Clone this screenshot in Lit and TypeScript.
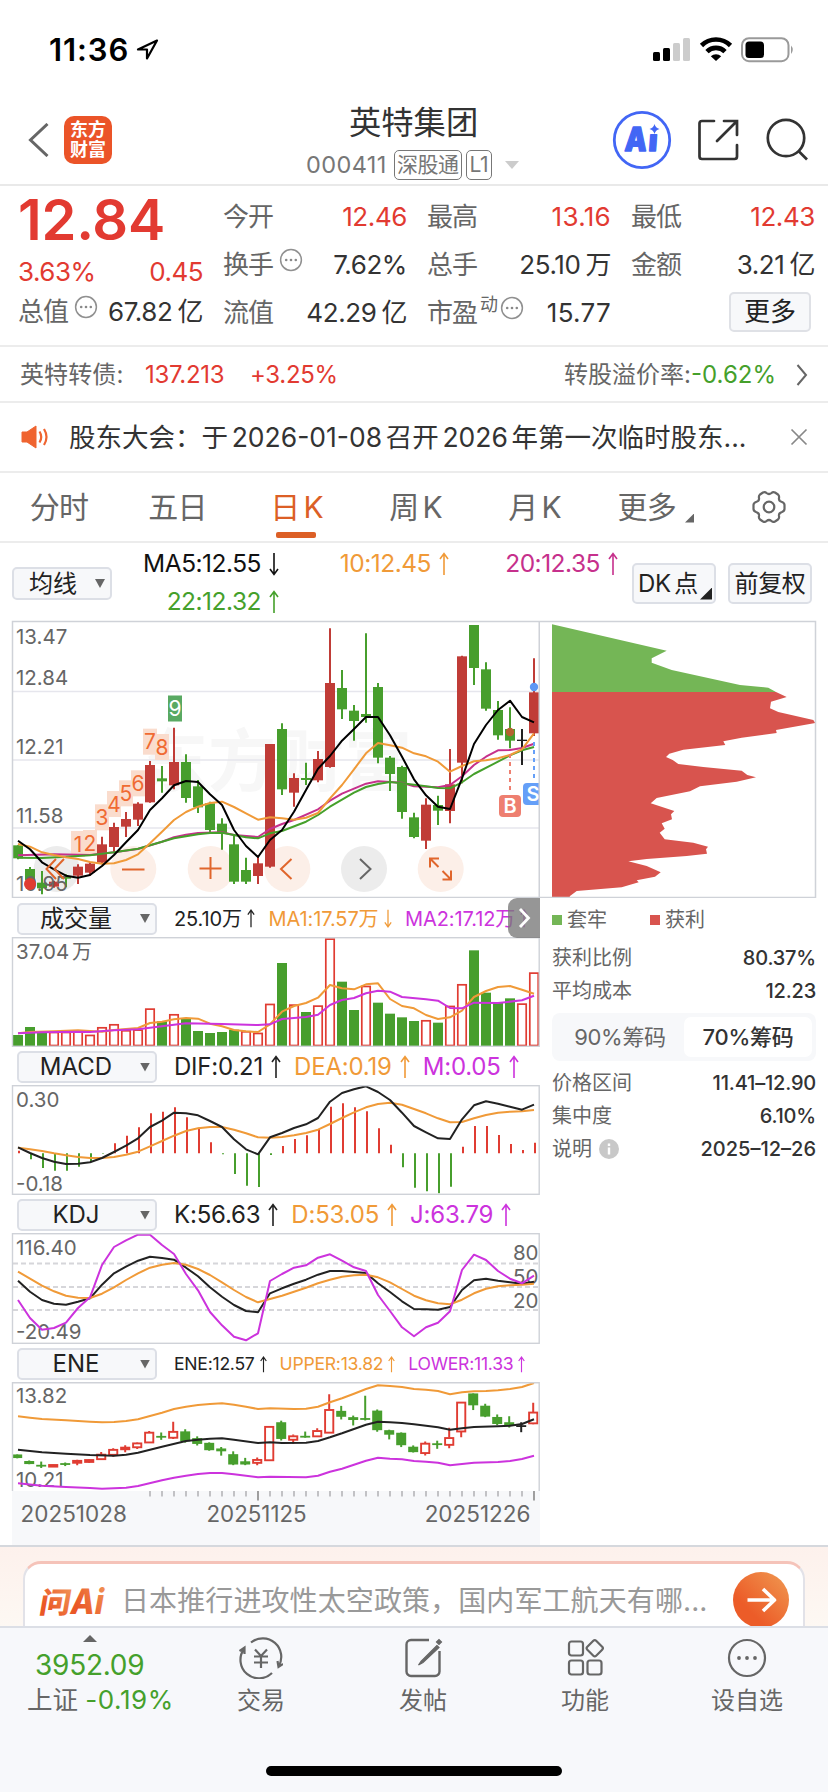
import { LitElement, html, svg, css } from "lit";
import { customElement } from "lit/decorators.js";

type Pt = [number, number];
const RED = "#c03c37";
const GREEN = "#479e2d";
const UPRED = "#e03c32";
const ORANGE = "#f09a38";
const PURPLE = "#cc33dd";
const cx = (i: number) => 18 + i * 12;

// kind, body top, body bottom, high, low
const candles: [string, number, number, number, number][] = [
  ["g", 706, 745, 706, 748], ["g", 777, 810, 771, 812], ["g", 818, 835, 783, 853], ["r", 815, 830, 812, 833],
  ["g", 800, 806, 793, 832], ["r", 770, 797, 763, 822], ["r", 761, 788, 756, 797], ["r", 703, 758, 680, 763],
  ["r", 651, 711, 638, 730], ["r", 627, 650, 606, 681], ["r", 581, 629, 577, 648], ["r", 465, 577, 453, 578],
  ["g", 505, 514, 468, 548], ["r", 456, 526, 353, 538], ["g", 456, 564, 433, 578], ["g", 529, 592, 510, 609],
  ["g", 580, 660, 575, 666], ["g", 641, 672, 625, 719], ["g", 703, 815, 672, 822], ["g", 780, 815, 743, 822],
  ["r", 760, 798, 738, 822], ["r", 402, 770, 402, 773], ["g", 357, 538, 340, 555], ["r", 504, 548, 490, 590],
  ["g", 504, 510, 458, 525], ["r", 447, 511, 423, 517], ["r", 219, 471, 55, 473], ["g", 234, 298, 180, 327],
  ["g", 302, 333, 285, 392], ["g", 312, 321, 70, 338], ["g", 231, 443, 219, 460], ["g", 443, 492, 438, 543],
  ["g", 471, 606, 467, 626], ["g", 622, 681, 608, 685], ["r", 584, 692, 565, 717], ["g", 585, 602, 557, 645],
  ["r", 523, 603, 417, 640], ["r", 139, 458, 137, 520], ["g", 45, 174, 45, 225], ["g", 178, 296, 157, 302],
  ["g", 300, 376, 273, 389], ["g", 357, 392, 292, 415], ["k", 389, 393, 357, 465], ["r", 247, 370, 145, 378],
];

const ma5 = [692, 718, 757, 778, 797, 803, 795, 768, 735, 697, 660, 600, 565, 526, 513, 516, 553, 585, 660, 708, 741, 690, 660, 605, 540, 476, 438, 392, 357, 321, 321, 376, 440, 508, 556, 590, 597, 505, 402, 345, 300, 272, 321, 337];
const ma10 = [702, 710, 727, 735, 742, 747, 756, 761, 760, 750, 733, 700, 665, 630, 606, 590, 579, 575, 591, 610, 629, 622, 625, 629, 623, 609, 565, 525, 478, 430, 399, 406, 413, 430, 439, 455, 485, 468, 454, 451, 445, 435, 418, 370];
const ma20: Pt[] = [[0, 736], [3, 733], [6, 735], [8, 727], [10, 717], [12, 695], [13, 682], [14, 674], [15, 669], [17, 667], [18, 675], [20, 681], [21, 657], [22, 642], [23, 630], [25, 598], [26, 572], [27, 551], [29, 521], [30, 514], [32, 518], [33, 529], [35, 532], [36, 525], [37, 499], [38, 465], [39, 440], [40, 421], [41, 420], [42, 414], [43, 401]];
const ma22: Pt[] = [[0, 743], [2, 744], [4, 740], [6, 736], [8, 727], [10, 716], [12, 695], [13, 685], [15, 673], [16, 669], [17, 668], [18, 675], [19, 682], [20, 685], [21, 670], [22, 663], [24, 635], [25, 615], [26, 590], [28, 548], [29, 531], [30, 522], [31, 516], [32, 520], [34, 529], [35, 534], [36, 535], [37, 517], [38, 492], [40, 455], [41, 436], [42, 421], [43, 411]];

const volume = [435, 411, 428, 425, 425, 423, 434, 411, 402, 420, 418, 355, 394, 372, 386, 423, 429, 426, 419, 423, 428, 341, 219, 343, 366, 346, 145, 275, 360, 287, 338, 371, 382, 393, 390, 398, 347, 282, 181, 308, 339, 325, 340, 247];
const volKinds = "gggrrrrrrrrrgrgggggrrrgrgrrggrggggrgrrggggrr";
const volMa1: Pt[] = [[0, 430], [1, 426], [3, 424], [5, 421], [7, 425], [8, 420], [10, 414], [11, 399], [12, 395], [13, 388], [14, 384], [15, 386], [16, 401], [17, 409], [18, 420], [19, 424], [20, 426], [21, 403], [22, 365], [23, 348], [24, 339], [25, 323], [26, 285], [27, 295], [28, 298], [29, 283], [30, 280], [31, 327], [32, 348], [33, 355], [34, 375], [35, 387], [36, 382], [37, 362], [38, 321], [39, 303], [40, 291], [41, 288], [42, 299], [43, 311]];
const volMa2: Pt[] = [[0, 430], [2, 427], [5, 425], [6, 426], [8, 421], [10, 418], [12, 409], [14, 400], [17, 402], [20, 405], [21, 403], [22, 387], [24, 381], [25, 374], [26, 345], [27, 330], [28, 324], [29, 310], [30, 302], [31, 305], [32, 321], [34, 328], [35, 332], [36, 354], [37, 355], [38, 338], [40, 339], [42, 331], [43, 317]];

const macdBars = [782, 808, 834, 842, 842, 830, 817, 791, 760, 737, 712, 670, 665, 652, 682, 713, 757, 793, 852, 887, 891, 795, 768, 747, 736, 717, 650, 640, 652, 664, 715, 764, 832, 893, 904, 910, 890, 770, 708, 708, 735, 762, 780, 758];
const dif = [772, 789, 804, 815, 822, 821, 817, 804, 786, 767, 745, 711, 692, 668, 670, 676, 693, 711, 748, 778, 793, 742, 729, 714, 703, 684, 635, 609, 598, 589, 606, 630, 668, 708, 727, 745, 747, 688, 646, 634, 641, 650, 659, 644];
const dea = [773, 778, 783, 790, 796, 801, 804, 804, 801, 794, 785, 769, 753, 737, 723, 715, 711, 711, 719, 730, 742, 743, 741, 736, 729, 719, 702, 684, 667, 652, 642, 638, 644, 657, 670, 685, 697, 696, 685, 675, 668, 665, 664, 660];

const kLine = [272, 305, 330, 341, 344, 335, 325, 284, 250, 230, 212, 200, 204, 209, 233, 259, 292, 320, 345, 363, 367, 310, 295, 281, 269, 254, 243, 243, 246, 249, 280, 306, 334, 357, 358, 359, 351, 300, 271, 266, 272, 277, 281, 275];
const dLine = [245, 266, 287, 304, 317, 323, 324, 311, 292, 270, 250, 233, 224, 219, 224, 237, 255, 277, 300, 321, 337, 327, 317, 305, 293, 280, 269, 260, 256, 254, 262, 277, 297, 317, 331, 340, 343, 329, 310, 296, 289, 286, 284, 281];
const jLine = [330, 384, 419, 414, 398, 354, 322, 225, 171, 151, 134, 134, 165, 192, 252, 301, 366, 406, 440, 451, 430, 273, 252, 233, 226, 203, 193, 212, 232, 243, 315, 363, 412, 439, 412, 398, 364, 240, 194, 210, 243, 266, 280, 257];

const eneUp: Pt[] = [[0, 679], [1, 683], [2, 687], [4, 691], [6, 695], [7, 697], [8, 696], [9, 693], [10, 688], [12, 668], [13, 657], [14, 650], [15, 645], [16, 642], [17, 640], [18, 644], [19, 650], [20, 657], [21, 655], [23, 657], [24, 656], [25, 650], [26, 637], [27, 625], [28, 611], [29, 597], [30, 586], [31, 588], [32, 591], [33, 597], [34, 599], [35, 603], [36, 613], [37, 607], [38, 604], [39, 603], [40, 601], [41, 597], [42, 591], [43, 579]];
const eneMid: Pt[] = [[0, 779], [2, 787], [4, 791], [6, 795], [8, 797], [9, 794], [10, 788], [12, 770], [14, 753], [15, 749], [16, 746], [17, 745], [18, 749], [20, 759], [21, 757], [22, 759], [24, 758], [25, 753], [26, 742], [27, 730], [28, 717], [29, 704], [30, 695], [31, 697], [32, 699], [33, 703], [34, 707], [35, 712], [36, 719], [37, 715], [38, 711], [40, 709], [41, 707], [42, 702], [43, 688]];
const eneLow: Pt[] = [[0, 880], [2, 887], [4, 891], [6, 894], [7, 896], [9, 893], [10, 888], [12, 871], [13, 863], [14, 857], [15, 852], [16, 849], [17, 849], [18, 853], [20, 862], [21, 860], [24, 862], [25, 857], [26, 845], [27, 836], [28, 824], [29, 812], [30, 803], [31, 806], [32, 808], [33, 813], [34, 815], [35, 818], [36, 826], [37, 822], [38, 818], [40, 816], [41, 813], [42, 807], [43, 797]];

const trapped: Pt[] = [[36, 43], [380, 122], [335, 145], [335, 158], [395, 180], [600, 225], [685, 233], [708, 246], [36, 246]];
const profit: Pt[] = [[36, 246], [708, 246], [740, 261], [693, 275], [690, 295], [715, 306], [820, 330], [826, 339], [708, 360], [710, 369], [605, 383], [550, 394], [556, 405], [430, 419], [388, 431], [378, 441], [398, 450], [415, 462], [490, 471], [605, 482], [622, 495], [648, 502], [590, 515], [480, 529], [450, 544], [350, 564], [332, 580], [403, 603], [393, 613], [396, 628], [365, 640], [374, 656], [359, 668], [374, 688], [460, 698], [504, 710], [498, 718], [501, 731], [440, 738], [320, 747], [265, 754], [320, 768], [362, 787], [345, 800], [290, 811], [296, 817], [245, 832], [110, 843], [90, 858], [88, 864], [36, 864]];

const counts: Pt[] = [[1, 702], [2, 699], [3, 622], [4, 582], [5, 550], [6, 520], [7, 395], [8, 411]];

const line = (data: number[] | Pt[], base: number, color: string, w = 2) => {
  const pts = (data as any[])
    .map((d, i) => (Array.isArray(d) ? d : [i, d]))
    .map(([i, y]) => `${cx(i)},${(base + y / 3).toFixed(1)}`)
    .join(" ");
  return svg`<polyline points=${pts} fill="none" stroke=${color} stroke-width=${w} stroke-linejoin="round"/>`;
};
const label = (x: number, y: number, t: string, anchor = "start", size = 20.5) =>
  svg`<text x=${x} y=${y} font-size=${size} fill="#666" text-anchor=${anchor}>${t}</text>`;

const arrow = (down = false) => html`<svg class="arr ${down ? "down" : ""}" viewBox="0 0 10 24"><path d="M5 23V1.5M1 7L5 1.5L9 7" fill="none" stroke="currentColor" stroke-width="1.6"/></svg>`;
const dots = html`<svg class="dots" viewBox="0 0 24 24"><circle cx="12" cy="12" r="10.4" fill="none" stroke="#909090" stroke-width="1.5"/><g fill="#888"><circle cx="7.2" cy="12" r="1.3"/><circle cx="12" cy="12" r="1.3"/><circle cx="16.8" cy="12" r="1.3"/></g></svg>`;

@customElement("app-root")
export class AppRoot extends LitElement {
  static styles = css`
    :host { display: flex; flex-direction: column; width: 828px; height: 1792px; overflow: hidden; background: #fff; color: #333;
      font-family: Inter, "Noto Sans CJK SC", sans-serif; font-size: 26px; line-height: 1; }
    * { box-sizing: border-box; }
    svg { display: block; flex: none; }
    svg text { font-family: Inter, "Noto Sans CJK SC", sans-serif; }
    .red { color: #e23a31; } .green { color: #45a02b; } .gray { color: #666; }
    .status { height: 88px; padding: 11px 33px 0 49px; display: flex; align-items: center; }
    .time { font-size: 31px; font-weight: 600; color: #000; letter-spacing: 0.9px; width: 87px; }
    .grow { flex: 1; }
    .nav { height: 98px; border-bottom: 2px solid #e9e9e9; display: grid; grid-template-columns: 306px 220px 1fr; }
    .left { display: flex; align-items: center; padding: 7px 0 0 28px; gap: 15px; }
    .logo { width: 48px; height: 48px; border-radius: 10px; background: #eb5428; color: #fff; font-weight: 700; font-size: 18px;
      line-height: 20px; text-align: center; padding-top: 4px; }
    .mid { display: flex; flex-direction: column; }
    .name { font-size: 32.3px; height: 61px; padding: 18px 0 0 43px; line-height: 34px; white-space: nowrap; }
    .code { display: flex; align-items: center; height: 32px; font-size: 23.5px; color: #777; }
    .code .num { width: 88px; letter-spacing: 0.4px; }
    .tag { border: 1.5px solid #777; border-radius: 5px; height: 30px; font-size: 21px; line-height: 27px; padding: 0 2px; margin-right: 4px; white-space: nowrap; letter-spacing: -0.5px; }
    .tag.l { padding: 0 3px; margin-right: 13px; }
    .tools { display: flex; align-items: center; padding: 8px 17px 0 86px; gap: 26px; }
    .quote { height: 161px; border-bottom: 2px solid #ececec; padding: 7px 13px 0 18px; display: grid; grid-template-columns: 185px repeat(3, 184px); column-gap: 20px; }
    .price { font-size: 56px; font-weight: 600; height: 62px; line-height: 54px; letter-spacing: -0.2px; }
    .pct { height: 33px; display: flex; align-items: center; justify-content: space-between; letter-spacing: -0.5px; }
    .cell { height: 48px; display: flex; align-items: center; letter-spacing: -0.4px; white-space: nowrap; }
    .cell .v { margin-left: auto; }
    .cell u { text-decoration: none; margin-left: 5px; letter-spacing: -0.5px; }
    .cell .gray { letter-spacing: -1px; }
    .cell .w { letter-spacing: 0.3px; }
    .dots { width: 24px; height: 24px; margin: -10px 0 0 6px; }
    .sup { font-size: 18px; margin: -16px 0 0 3px; color: #666; }
    .sup + .dots { margin-left: 2px; }
    .morebtn { width: 82px; height: 40px; margin: 3px 4px 0 auto; border: 2px solid #dfe1e6; border-radius: 5px; background: #f7f8fa; color: #222; text-align: center; line-height: 36px; font-size: 26px; }
    .bond { height: 56px; border-bottom: 2px solid #ececec; display: flex; align-items: center; padding: 1px 20px 0 20px; font-size: 24px; letter-spacing: -0.3px; }
    .bond .a { width: 125px; letter-spacing: 0.1px; } .bond .b { width: 105px; }
    .bond .p { letter-spacing: 0; }
    .bond .chev { margin-left: 20px; }
    .notice { height: 70px; border-bottom: 2px solid #ececec; display: flex; align-items: center; padding: 0 20px 0 21px; font-size: 26.5px; white-space: nowrap; }
    .notice .t { margin-left: 20px; flex: 1; word-spacing: -3.8px; }
    .tabs { height: 70px; border-bottom: 2px solid #ececec; display: grid; grid-template-columns: 118px 119px 119px 119px 119px 100px 1fr; font-size: 30px; color: #666; }
    .tab { display: flex; flex-direction: column; align-items: center; line-height: 69px; height: 68px; white-space: nowrap; letter-spacing: -0.8px; word-spacing: -3.5px; }
    .tab.on { color: #dc5f26; }
    .tab.on::after { content: ""; width: 40px; height: 6px; border-radius: 2px; background: #dc5f26; margin: -10px 1px 0 0; }
    .tab.m { flex-direction: row; justify-content: flex-end; gap: 9px; }
    .tri { width: 9px; height: 9px; background: #666; clip-path: polygon(100% 0, 100% 100%, 0 100%); margin-top: 22px; }
    .tab.g { align-items: flex-end; justify-content: center; padding-right: 42px; }
    .marow { height: 77px; display: grid; grid-template-columns: 112px 167px 170px 169px 14px 84px 12px 84px; }
    .btn { border: 2px solid #dcdfe6; border-radius: 5px; background: #f7f8fa; color: #222; display: flex; align-items: center; white-space: nowrap; flex: none; }
    .mab { margin: 24px 0 0 12px; width: 100px; height: 33px; font-size: 24px; padding-left: 15px; }
    .caret { width: 10px; height: 9px; background: #666; clip-path: polygon(0 0, 100% 0, 50% 100%); margin: 0 5px 0 auto; }
    .ma { display: flex; justify-content: flex-end; align-items: center; height: 38px; font-size: 24.5px; letter-spacing: -0.5px; white-space: nowrap; padding-top: 3px; }
    .macol { display: flex; flex-direction: column; }
    .arr { width: 10px; height: 24px; margin-left: 8px; }
    .down { transform: rotate(180deg); }
    .blk { color: #111; } .or { color: #f09a38; } .mg { color: #c6308c; } .pu { color: #cc33dd; } .dk { color: #222; }
    .tb { height: 41px; margin-top: 20px; font-size: 24px; justify-content: center; letter-spacing: -0.3px; word-spacing: -3px; }
    .dkb { padding-left: 4px; justify-content: flex-start; }
    .dkb i { width: 12px; height: 12px; background: #222; clip-path: polygon(100% 0, 100% 100%, 0 100%); margin: 20px 0 0 2px; }
    .body { display: flex; height: 925px; }
    .charts { width: 540px; position: relative; }
    .head { height: 39px; display: flex; align-items: center; padding: 2px 0 0 17px; white-space: nowrap; overflow: hidden; }
    .head.s { height: 38px; }
    .sel { width: 140px; height: 32px; font-size: 24px; margin-right: 17px; }
    .sel span { flex: 1; text-align: center; margin: 0 2px 0 -5px; }
    .h { display: flex; flex: none; align-items: center; margin-right: 13px; font-size: 24px; letter-spacing: -0.2px; }
    .sm .h { font-size: 20px; letter-spacing: -0.1px; margin-right: 12.5px; }
    .sm .arr { height: 19px; margin-left: 4px; }
    .xs .h { font-size: 17.6px; letter-spacing: -0.25px; margin-right: 12px; }
    .xs .arr { height: 17px; margin-left: 4px; width: 9px; }
    .pull { position: absolute; left: 508px; top: 278px; width: 32px; height: 40px; border-radius: 9px 0 0 9px; background: rgba(120,120,120,.78); padding: 10px 0 0 9px; }
    .side { width: 288px; }
    .info { padding: 0 12px; font-size: 20px; color: #666; }
    .legend { height: 44px; display: flex; align-items: center; }
    .sq { width: 10px; height: 10px; margin-right: 5px; }
    .sq.gn { background: #74b656; } .sq.rd { background: #d8544e; margin-left: 43px; }
    .row { height: 32.5px; display: flex; align-items: center; }
    .row b { margin-left: auto; font-weight: 500; color: #333; font-size: 20px; letter-spacing: -0.2px; }
    .row.d { height: 34.5px; } .row.d b { letter-spacing: 0; }
    .seg { height: 48px; border-radius: 8px; background: #f7f8fa; padding: 4px; display: flex; margin: 6px 0; font-size: 22px; }
    .seg div { flex: 1; line-height: 40px; text-align: center; border-radius: 7px; letter-spacing: -0.3px; white-space: nowrap; }
    .seg .s { background: #fff; color: #333; font-weight: 500; }
    .ask { height: 81px; border-top: 2px solid #d5d8dd; background: linear-gradient(#fdf1ec, #fdf8f3); padding: 14px 23px 0; overflow: hidden; flex: none; }
    .card { height: 90px; border: 2px solid #e2e2e8; border-top: 3px solid #f5c3b9; border-radius: 18px; background: #fff; display: flex; padding-left: 13px; }
    .wen { margin-top: 13px; }
    .q { color: #999; font-size: 28px; line-height: 75px; letter-spacing: 0.1px; white-space: nowrap; width: 609px; margin-left: -3px; }
    .go { margin: 8px 0 0 3px; }
    .foot { height: 166px; border-top: 2px solid #dcdfe6; background: #f7f8fb; display: grid; grid-template-columns: 180px repeat(4, 162px); font-size: 24px; color: #666; position: relative; }
    .idx { white-space: nowrap; }
    .up { width: 14px; height: 7px; background: #666; clip-path: polygon(50% 0, 100% 100%, 0 100%); margin: 7px 0 0 83px; }
    .pt { font-size: 28px; height: 34px; line-height: 34px; margin-top: 6px; padding-left: 35px; letter-spacing: -0.25px; }
    .sz { height: 32px; line-height: 32px; font-size: 25.5px; margin-top: 2px; padding-left: 27px; letter-spacing: 0; }
    .sz .green { font-size: 26px; letter-spacing: 0.6px; }
    .item { display: flex; flex-direction: column; align-items: center; padding-top: 9px; line-height: 30px; }
    .item span { margin-top: 7px; }
    .home { position: absolute; left: 266px; top: 138px; width: 296px; height: 10px; border-radius: 5px; background: #000; }
  `;

  private mainChart() {
    return html`<svg width="540" height="278" viewBox="0 620 540 278">
      <g font-weight="700" font-size="68" fill="#f7f7f7"><text x="140" y="786" textLength="272">东方财富</text></g>
      <path d="M13 691.5H540M13 760H540M13 828H540" stroke="#e6e6ed" stroke-width="1.3"/>
      ${[56.7, 133.3, 210.7, 287.3, 364, 440.7].map((x, i) => svg`<circle cx=${x} cy="869" r="23" fill=${i % 4 ? "#fcefe8" : "#ececec"}/>`)}
      ${counts.map(([n, y]) => svg`<rect x=${cx(n + 4) - 7} y=${610 + y / 3 - 13} width="14" height="26" fill="#fadccd"/>`)}
      <rect x="168" y="695.5" width="14" height="26" fill="#59a962"/>
      ${candles.map(([k, t, b, h, l], i) => {
        const c = k === "g" ? GREEN : k === "r" ? RED : "#222";
        return svg`<path d="M${cx(i)} ${610 + h / 3}V${610 + l / 3}" stroke=${c} stroke-width="2"/><rect x=${cx(i) - 5} y=${610 + t / 3} width="10" height=${(b - t) / 3} fill=${c}/>`;
      })}
      ${label(16, 644, "13.47")}${label(16, 685, "12.84")}${label(16, 754, "12.21")}${label(16, 822.5, "11.58")}${label(16, 891, "10.95")}
      ${line(ma20, 610, "#c6308c")}${line(ma22, 610, "#45a02b")}${line(ma10, 610, ORANGE)}${line(ma5, 610, "#000")}
      ${counts.map(([n, y]) => svg`<text x=${cx(n + 4)} y=${617.5 + y / 3} font-size="21" fill="#f06a32" text-anchor="middle">${n}</text>`)}
      <text x="175" y="716" font-size="21" fill="#fff" text-anchor="middle">9</text>
      <circle cx="30" cy="884" r="6" fill="#e03c32"/>
      <circle cx="510" cy="732" r="4.2" fill="#b4622f"/><circle cx="534" cy="687" r="4.2" fill="#5c97f5"/>
      <path d="M510 754V793" stroke="#ee7f70" stroke-width="2" stroke-dasharray="4 4"/>
      <path d="M534 742V782" stroke="#659ff8" stroke-width="2" stroke-dasharray="4 4"/>
      <rect x="499" y="795" width="22" height="22" rx="4" fill="#ee7f70"/><text x="510" y="813" font-size="20" font-weight="600" fill="#fff" text-anchor="middle">B</text>
      <path d="M540 783H527a4 4 0 0 0-4 4v14a4 4 0 0 0 4 4h13z" fill="#659ff8"/><text x="526.5" y="801" font-size="20" font-weight="600" fill="#fff">S</text>
      <g fill="none" stroke="#e0662c" stroke-width="2">
        <path d="M56 859L46.500 869L56 879M64 859L54.500 869L64 879"/>
        <path d="M122 869.500H144.500M199.500 868.500H221.500M210.500 857V879"/>
        <path d="M291.500 859L281 869L291.500 879"/><path d="M360 859L370.500 869L360 879" stroke="#666"/>
        <path d="M430 867.500V858.500H439M430.500 859L438.500 867M442.500 879.500H451V870.500M442.500 871L451 879.500"/>
      </g>
      <path d="M540 621.500H12.500V897.500H540" fill="none" stroke="#cfd2d8" stroke-width="1.5"/>
      <rect x="538.500" y="621" width="1.500" height="277" fill="#cfd2d8"/>
    </svg>`;
  }

  private volumeChart() {
    return html`<svg width="540" height="110" viewBox="0 937 540 110">
      ${label(16, 958.5, "37.04")}${label(72, 958.5, "万", "start", 20)}
      ${volume.map((y, i) => {
        const t = 890 + y / 3, r = volKinds[i] === "r";
        return r
          ? svg`<rect x=${cx(i) - 4.2} y=${t + 0.8} width="8.4" height=${1044.7 - t} fill="#fff" stroke=${UPRED} stroke-width="1.7"/>`
          : svg`<rect x=${cx(i) - 5} y=${t} width="10" height=${1046 - t} fill=${GREEN}/>`;
      })}
      ${line(volMa1, 890, ORANGE)}${line(volMa2, 890, PURPLE)}
      <rect x="12.500" y="937.700" width="526.700" height="108.600" fill="none" stroke="#cfd2d8" stroke-width="1.4"/>
    </svg>`;
  }

  private macdChart() {
    return html`<svg width="540" height="110" viewBox="0 1085 540 110">
      ${label(16, 1106.5, "0.30")}${label(16, 1190.5, "-0.18")}
      ${macdBars.map((y, i) => svg`<path d="M${cx(i) + 1} 1153.3V${890 + y / 3}" stroke=${y > 790 ? GREEN : UPRED} stroke-width="2"/>`)}
      ${line(dea, 890, ORANGE)}${line(dif, 890, "#222")}
      <rect x="12.500" y="1085.700" width="526.700" height="108.600" fill="none" stroke="#cfd2d8" stroke-width="1.4"/>
    </svg>`;
  }

  private kdjChart() {
    return html`<svg width="540" height="111" viewBox="0 1233 540 111">
      <path d="M13 1263.500H539M13 1287H539M13 1310H539" stroke="#d6d6da" stroke-width="1.8" stroke-dasharray="5 3"/>
      ${label(16, 1254.5, "116.40")}${label(16, 1338.5, "-20.49")}
      ${label(538.5, 1259.5, "80", "end")}${label(538.5, 1283.5, "50", "end")}${label(538.5, 1308, "20", "end")}
      ${line(kLine, 1190, "#222")}${line(dLine, 1190, ORANGE)}${line(jLine, 1190, PURPLE)}
      <rect x="12.500" y="1233.700" width="526.700" height="109.600" fill="none" stroke="#cfd2d8" stroke-width="1.4"/>
    </svg>`;
  }

  private eneChart() {
    const m = (y: number) => 1190 + (597.8 + 0.277 * y) / 3;
    return html`<svg width="540" height="163" viewBox="0 1382 540 163">
      <rect x="12" y="1491" width="528" height="54" fill="#f7f8fa"/>
      ${label(16, 1402.5, "13.82")}${label(16, 1486.5, "10.21")}
      ${candles.map(([k, t, b, h, l], i) => {
        const x = cx(i) - 0.8, T = m(t), B = m(b);
        return k === "r"
          ? svg`<path d="M${x} ${m(h)}V${T}M${x} ${B}V${m(l)}" stroke=${UPRED} stroke-width="2"/><rect x=${x - 4.1} y=${T + 0.5} width="8.2" height=${Math.max(B - T - 0.6, 1.6)} fill="#fff" stroke=${UPRED} stroke-width="1.9"/>`
          : svg`<path d="M${x} ${m(h)}V${m(l)}" stroke=${k === "g" ? GREEN : "#222"} stroke-width="2"/><rect x=${x - 5} y=${T} width="10" height=${Math.max(B - T, 1.8)} fill=${k === "g" ? GREEN : "#222"}/>`;
      })}
      ${line(eneUp, 1190, ORANGE)}${line(eneMid, 1190, "#222")}${line(eneLow, 1190, PURPLE)}
      ${Array.from({ length: 33 }, (_, k) => k + 11).map((i) => svg`<path d="M${cx(i)} 1491V${i === 20 || i === 43 ? 1500.5 : 1496.5}" stroke=${i === 20 || i === 43 ? "#888" : "#b4b4b8"} stroke-width="1.6"/>`)}
      ${label(20.5, 1522, "20251028", "start", 22.5)}${label(206.5, 1522, "20251125", "start", 22.3)}${label(530.5, 1522, "20251226", "end", 22.5)}
      <path d="M12.500 1491V1382.700H539.200V1491" fill="none" stroke="#cfd2d8" stroke-width="1.4"/>
    </svg>`;
  }

  private chips() {
    const p = (a: Pt[]) => a.map(([x, y]) => `${(x / 3).toFixed(1)},${(610 + y / 3).toFixed(1)}`).join(" ");
    return html`<svg width="288" height="278" viewBox="0 620 288 278">
      <polygon points=${p(trapped)} fill="#74b656"/><polygon points=${p(profit)} fill="#d8544e"/>
      <path d="M0 621.500H275.500V897.500H0" fill="none" stroke="#cfd2d8" stroke-width="1.5"/>
    </svg>`;
  }

  render() {
    return html`
      <div class="status">
        <div class="time">11:36</div>
        <svg width="23" height="22" viewBox="0 0 23 22"><path d="M21 1.500L2 10.500H11V19.500Z" fill="none" stroke="#000" stroke-width="2.2" stroke-linejoin="round"/></svg>
        <div class="grow"></div>
        <svg width="143" height="28" viewBox="652 36 143 28">
          <rect x="653" y="52" width="7" height="9" rx="1.5"/><rect x="663" y="48" width="7" height="13" rx="1.5"/>
          <rect x="673" y="43" width="7" height="18" rx="1.5" fill="#ccc"/><rect x="683" y="38" width="7" height="23" rx="1.5" fill="#ccc"/>
          <g fill="none" stroke="#000" stroke-width="4.6"><path d="M701.500 45.500A20.500 20.500 0 0 1 730.500 45.500"/><path d="M707 51.700A12.600 12.600 0 0 1 725 51.700"/></g>
          <path d="M716 61L710.800 56.300A7.600 7.600 0 0 1 721.200 56.300Z"/>
          <rect x="742" y="38.200" width="46.500" height="23" rx="7" fill="none" stroke="#9a9a9a" stroke-width="2"/>
          <rect x="745.500" y="41.500" width="18.500" height="16.500" rx="3.5"/><path d="M791 45.500Q794.500 49.500 791 54Z" fill="#9a9a9a"/>
        </svg>
      </div>
      <div class="nav">
        <div class="left">
          <svg width="21" height="34" viewBox="0 0 21 34"><path d="M19.500 1L2.500 17L19.500 33" fill="none" stroke="#666" stroke-width="3"/></svg>
          <div class="logo">东方<br />财富</div>
        </div>
        <div class="mid">
          <div class="name">英特集团</div>
          <div class="code"><span class="num">000411</span><span class="tag">深股通</span><span class="tag l">L1</span>
            <svg width="14" height="8" viewBox="0 0 14 8"><path d="M0 0H14L7 8Z" fill="#ccc"/></svg></div>
        </div>
        <div class="tools">
          <svg width="60" height="60" viewBox="0 0 60 60"><circle cx="30" cy="30" r="27.7" fill="none" stroke="#4266f5" stroke-width="2.8"/>
            <g transform="skewX(-4)" fill="#4266f5" stroke="#4266f5" stroke-width="1.4" stroke-linejoin="round" font-weight="900"><text x="15" y="41" font-size="33" textLength="22" lengthAdjust="spacingAndGlyphs">A</text><text x="39" y="41.5" font-size="30">ı</text></g>
            <path d="M42.500 14Q43.500 18 47.500 19Q43.500 20 42.500 24Q41.500 20 37.500 19Q41.500 18 42.500 14Z" fill="#4266f5"/></svg>
          <svg width="41" height="42" viewBox="0 0 41 42"><path d="M16 2H4a2.500 2.500 0 0 0-2.500 2.500V37.500A2.500 2.500 0 0 0 4 40H36.500A2.500 2.500 0 0 0 39 37.500V26M26 2H39V16M38.500 2.500L19 22" fill="none" stroke="#333" stroke-width="2.7" stroke-linecap="round"/></svg>
          <svg width="44" height="44" viewBox="0 0 44 44"><circle cx="21" cy="20" r="18.2" fill="none" stroke="#333" stroke-width="2.7"/><path d="M33.500 33L42 41.500" stroke="#333" stroke-width="2.7"/></svg>
        </div>
      </div>
      <div class="quote">
        <div>
          <div class="price red">12.84</div>
          <div class="pct red"><span>3.63%</span><span>0.45</span></div>
          <div class="cell"><span class="gray">总值</span>${dots}<span class="v">67.82<u>亿</u></span></div>
        </div>
        <div>
          <div class="cell"><span class="gray">今开</span><span class="v red">12.46</span></div>
          <div class="cell"><span class="gray">换手</span>${dots}<span class="v">7.62%</span></div>
          <div class="cell"><span class="gray">流值</span><span class="v">42.29<u>亿</u></span></div>
        </div>
        <div>
          <div class="cell"><span class="gray">最高</span><span class="v red w">13.16</span></div>
          <div class="cell"><span class="gray">总手</span><span class="v">25.10<u>万</u></span></div>
          <div class="cell"><span class="gray">市盈</span><span class="sup">动</span>${dots}<span class="v w">15.77</span></div>
        </div>
        <div>
          <div class="cell"><span class="gray">最低</span><span class="v red">12.43</span></div>
          <div class="cell"><span class="gray">金额</span><span class="v">3.21<u>亿</u></span></div>
          <div class="morebtn">更多</div>
        </div>
      </div>
      <div class="bond"><span class="a gray">英特转债:</span><span class="b red">137.213</span><span class="red">+3.25%</span><span class="grow"></span>
        <span class="gray p">转股溢价率:</span><span class="green p">-0.62%</span>
        <svg class="chev" width="12" height="22" viewBox="0 0 12 22"><path d="M1.500 1L10 11L1.500 21" fill="none" stroke="#666" stroke-width="2"/></svg></div>
      <div class="notice">
        <svg width="28" height="24" viewBox="0 0 28 24"><path d="M1 7H6L15 1V23L6 17H1Z" fill="#ef6430" stroke="#ef6430" stroke-linejoin="round"/><path d="M18.500 6.500Q22 12 18.500 17.500M23 4Q28 12 23 20" fill="none" stroke="#ef6430" stroke-width="2.2"/></svg>
        <span class="t">股东大会：于 2026-01-08 召开 2026 年第一次临时股东...</span>
        <svg width="18" height="18" viewBox="0 0 18 18"><path d="M1.500 1.500L16.500 16.500M16.500 1.500L1.500 16.500" stroke="#888" stroke-width="1.7"/></svg>
      </div>
      <div class="tabs">
        <div class="tab">分时</div><div class="tab">五日</div><div class="tab on">日 K</div><div class="tab">周 K</div><div class="tab">月 K</div>
        <div class="tab m">更多<i class="tri"></i></div>
        <div class="tab g"><svg width="34" height="34" viewBox="0 0 34 34"><g fill="none" stroke="#666" stroke-width="2.2" stroke-linejoin="round"><path d="M11 2.500Q13 1.500 14.500 3Q17 5 19.500 3Q21 1.500 23 2.500L26 4.500Q27.500 6 27 8Q26.500 11 30 12Q32.500 13 32.500 15V19Q32.500 21 30 22Q26.500 23 27 26Q27.500 28 26 29.500L23 31.500Q21 32.500 19.500 31Q17 29 14.500 31Q13 32.500 11 31.500L8 29.500Q6.500 28 7 26Q7.500 23 4 22Q1.500 21 1.500 19V15Q1.500 13 4 12Q7.500 11 7 8Q6.500 6 8 4.500Z"/><circle cx="17" cy="17" r="5.3"/></g></svg></div>
      </div>
      <div class="marow">
        <div class="btn mab">均线<i class="caret"></i></div>
        <div class="macol"><div class="ma blk">MA5:12.55${arrow(true)}</div><div class="ma green">22:12.32${arrow()}</div></div>
        <div class="ma or">10:12.45${arrow()}</div>
        <div class="ma mg">20:12.35${arrow()}</div>
        <span></span><div class="btn tb dkb">DK 点<i></i></div><span></span><div class="btn tb">前复权</div>
      </div>
      <div class="body">
        <div class="charts">
          ${this.mainChart()}
          <div class="head sm"><div class="btn sel"><span>成交量</span><i class="caret"></i></div>
            <span class="h dk">25.10万${arrow()}</span><span class="h or">MA1:17.57万${arrow(true)}</span><span class="h pu">MA2:17.12万${arrow()}</span></div>
          ${this.volumeChart()}
          <div class="head s"><div class="btn sel"><span>MACD</span><i class="caret"></i></div>
            <span class="h dk">DIF:0.21${arrow()}</span><span class="h or">DEA:0.19${arrow()}</span><span class="h pu">M:0.05${arrow()}</span></div>
          ${this.macdChart()}
          <div class="head s"><div class="btn sel"><span>KDJ</span><i class="caret"></i></div>
            <span class="h dk">K:56.63${arrow()}</span><span class="h or">D:53.05${arrow()}</span><span class="h pu">J:63.79${arrow()}</span></div>
          ${this.kdjChart()}
          <div class="head s xs"><div class="btn sel"><span>ENE</span><i class="caret"></i></div>
            <span class="h dk">ENE:12.57${arrow()}</span><span class="h or">UPPER:13.82${arrow()}</span><span class="h pu">LOWER:11.33${arrow()}</span></div>
          ${this.eneChart()}
          <div class="pull"><svg width="14" height="20" viewBox="0 0 14 20"><path d="M3 1L11.500 10L3 19" fill="none" stroke="#fff" stroke-width="2.8"/></svg></div>
        </div>
        <div class="side">
          ${this.chips()}
          <div class="info">
            <div class="legend"><i class="sq gn"></i>套牢<i class="sq rd"></i>获利</div>
            <div class="row">获利比例<b>80.37%</b></div>
            <div class="row">平均成本<b>12.23</b></div>
            <div class="seg"><div>90%筹码</div><div class="s">70%筹码</div></div>
            <div class="row">价格区间<b>11.41–12.90</b></div>
            <div class="row">集中度<b>6.10%</b></div>
            <div class="row d">说明<svg width="36" height="20" viewBox="0 0 36 20"><circle cx="17" cy="10" r="10" fill="#c8c8c8"/><path d="M17 8.500V15.500M17 4.500V7" stroke="#fff" stroke-width="2.4"/></svg><b>2025–12–26</b></div>
          </div>
        </div>
      </div>
      <div class="ask"><div class="card">
        <svg class="wen" width="86" height="50" viewBox="0 -9 86 50"><defs><linearGradient id="og" x1="0" y1="1" x2="1" y2="0"><stop offset="0.3" stop-color="#ea5826"/><stop offset="1" stop-color="#f29a5c"/></linearGradient></defs>
          <g transform="skewX(-10)" fill="url(#og)" font-weight="900"><text x="5" y="27" font-size="29" textLength="31" lengthAdjust="spacingAndGlyphs">问</text><text x="36" y="28" font-size="35" font-weight="800" textLength="33" lengthAdjust="spacingAndGlyphs">Ai</text></g></svg>
        <div class="q">日本推行进攻性太空政策，国内军工航天有哪...</div>
        <svg class="go" width="56" height="56" viewBox="0 0 56 56"><defs><linearGradient id="gg" x1="0" y1="1" x2="1" y2="0"><stop offset=".3" stop-color="#ec5c28"/><stop offset="1" stop-color="#f09a52"/></linearGradient></defs><circle cx="28" cy="28" r="28" fill="url(#gg)"/><path d="M14.500 28H41M30 17L41.500 28L30 39" fill="none" stroke="#fff" stroke-width="3.6" stroke-linejoin="round"/></svg>
      </div></div>
      <div class="foot">
        <div class="idx"><div class="up"></div><div class="pt green">3952.09</div><div class="sz">上证 <span class="green">-0.19%</span></div></div>
        <div class="item"><svg width="44" height="42" viewBox="0 0 44 42"><g fill="none" stroke="#666" stroke-width="2.2"><path d="M12 5.500A18.500 18.500 0 0 1 39.500 29.500M38.500 24L39.500 30L44 27M33 36A18.500 18.500 0 0 1 5 12M0.500 14L5.500 10.500V17"/><path d="M16 12.500L22 19L28 12.500M22 19V31M15 19.500H29M15 25.500H29"/></g></svg><span>交易</span></div>
        <div class="item"><svg width="40" height="42" viewBox="0 0 40 42"><path d="M26 3H8a4.500 4.500 0 0 0-4.500 4.500V34.500A4.500 4.500 0 0 0 8 39H32A4.500 4.500 0 0 0 36.500 34.500V14" fill="none" stroke="#666" stroke-width="2.4"/><path d="M34 8.500L18 24.500L15.500 28L20 25.500L36 10.500ZM33.500 5L36 2.500L38.500 5L36 7.500Z" fill="#666" stroke="#666" stroke-width="1.2"/></svg><span>发帖</span></div>
        <div class="item"><svg width="38" height="42" viewBox="0 0 38 42"><g fill="none" stroke="#666" stroke-width="2.2"><rect x="3" y="4.500" width="14" height="14" rx="2.5"/><rect x="3" y="23.500" width="14" height="14" rx="2.5"/><rect x="21.500" y="23.500" width="14" height="14" rx="2.5"/><rect x="22.500" y="5" width="12.500" height="12.500" rx="2" transform="rotate(45 28.750 11.250)"/></g></svg><span>功能</span></div>
        <div class="item"><svg width="40" height="42" viewBox="0 0 40 42"><circle cx="20" cy="21" r="18" fill="none" stroke="#666" stroke-width="2.2"/><g fill="#666"><circle cx="12" cy="21" r="1.9"/><circle cx="20" cy="21" r="1.9"/><circle cx="28" cy="21" r="1.9"/></g></svg><span>设自选</span></div>
        <div class="home"></div>
      </div>
    `;
  }
}
